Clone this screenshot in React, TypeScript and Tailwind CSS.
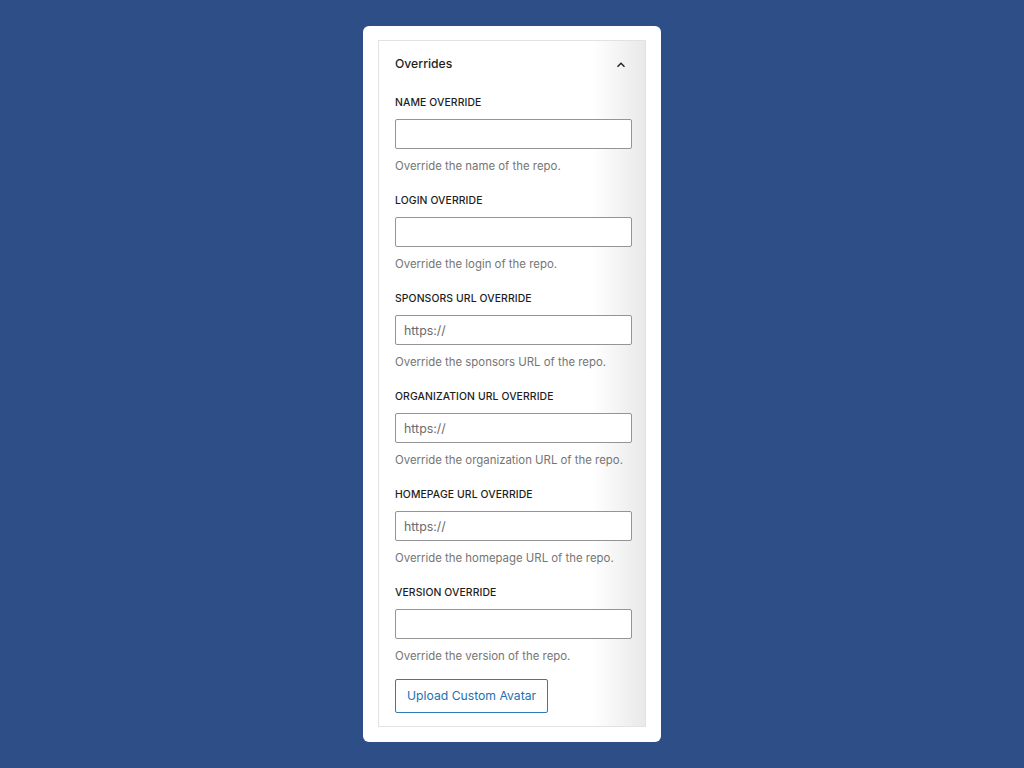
const fields = [
  { label: "Name Override", help: "Override the name of the repo.", placeholder: "" },
  { label: "Login Override", help: "Override the login of the repo.", placeholder: "" },
  { label: "Sponsors URL Override", help: "Override the sponsors URL of the repo.", placeholder: "https://" },
  { label: "Organization URL Override", help: "Override the organization URL of the repo.", placeholder: "https://" },
  { label: "Homepage URL Override", help: "Override the homepage URL of the repo.", placeholder: "https://" },
  { label: "Version Override", help: "Override the version of the repo.", placeholder: "" },
];

function App() {
  return (
    <div
      className="w-screen h-screen bg-[#2d4e87] flex items-center justify-center"
      style={{ fontFamily: "Inter, 'Noto Sans', sans-serif" }}
    >
      <div className="w-[298px] h-[716px] bg-white rounded-[6px] pt-[14px] px-[15px] pb-[15px] flex">
        <div className="w-[268px] border border-[#e2e2e2] bg-[linear-gradient(to_right,#ffffff_80%,#e9e9e9)] flex flex-col pl-[16px] pr-[14px]">
          <div className="flex items-center justify-between pt-[10px] h-[43px] pb-[6px]">
            <span className="text-[12.2px] font-medium text-[#1e1e1e]">Overrides</span>
            <svg width="14" height="14" viewBox="0 0 24 24" className="mr-[3px]" fill="none" stroke="#1e1e1e" strokeWidth="2.4">
              <path d="M6 15l6-6 6 6" />
            </svg>
          </div>
          <div className="flex flex-col gap-[19px] pt-[11px]">
            {fields.map((f) => (
              <div key={f.label} className="flex flex-col">
                <label className="text-[10.4px] leading-[16px] font-medium uppercase text-[#1e1e1e] tracking-[0.01em]">
                  {f.label}
                </label>
                <input
                  className="mt-[8px] h-[30px] w-[237px] border border-[#949494] rounded-[2px] bg-white px-[8px] text-[12.4px] text-[#1e1e1e] placeholder:text-[#6b6b6b] outline-none"
                  placeholder={f.placeholder}
                />
                <p className="mt-[9px] text-[11.4px] leading-[16px] text-[#757575]">{f.help}</p>
              </div>
            ))}
          </div>
          <div className="pt-[15px]">
            <button className="h-[34px] px-[11px] border border-[#2f7bb3] rounded-[2px] text-[12.2px] text-[#2271b1] bg-white">
              Upload Custom Avatar
            </button>
          </div>
        </div>
      </div>
    </div>
  );
}

export default App;
